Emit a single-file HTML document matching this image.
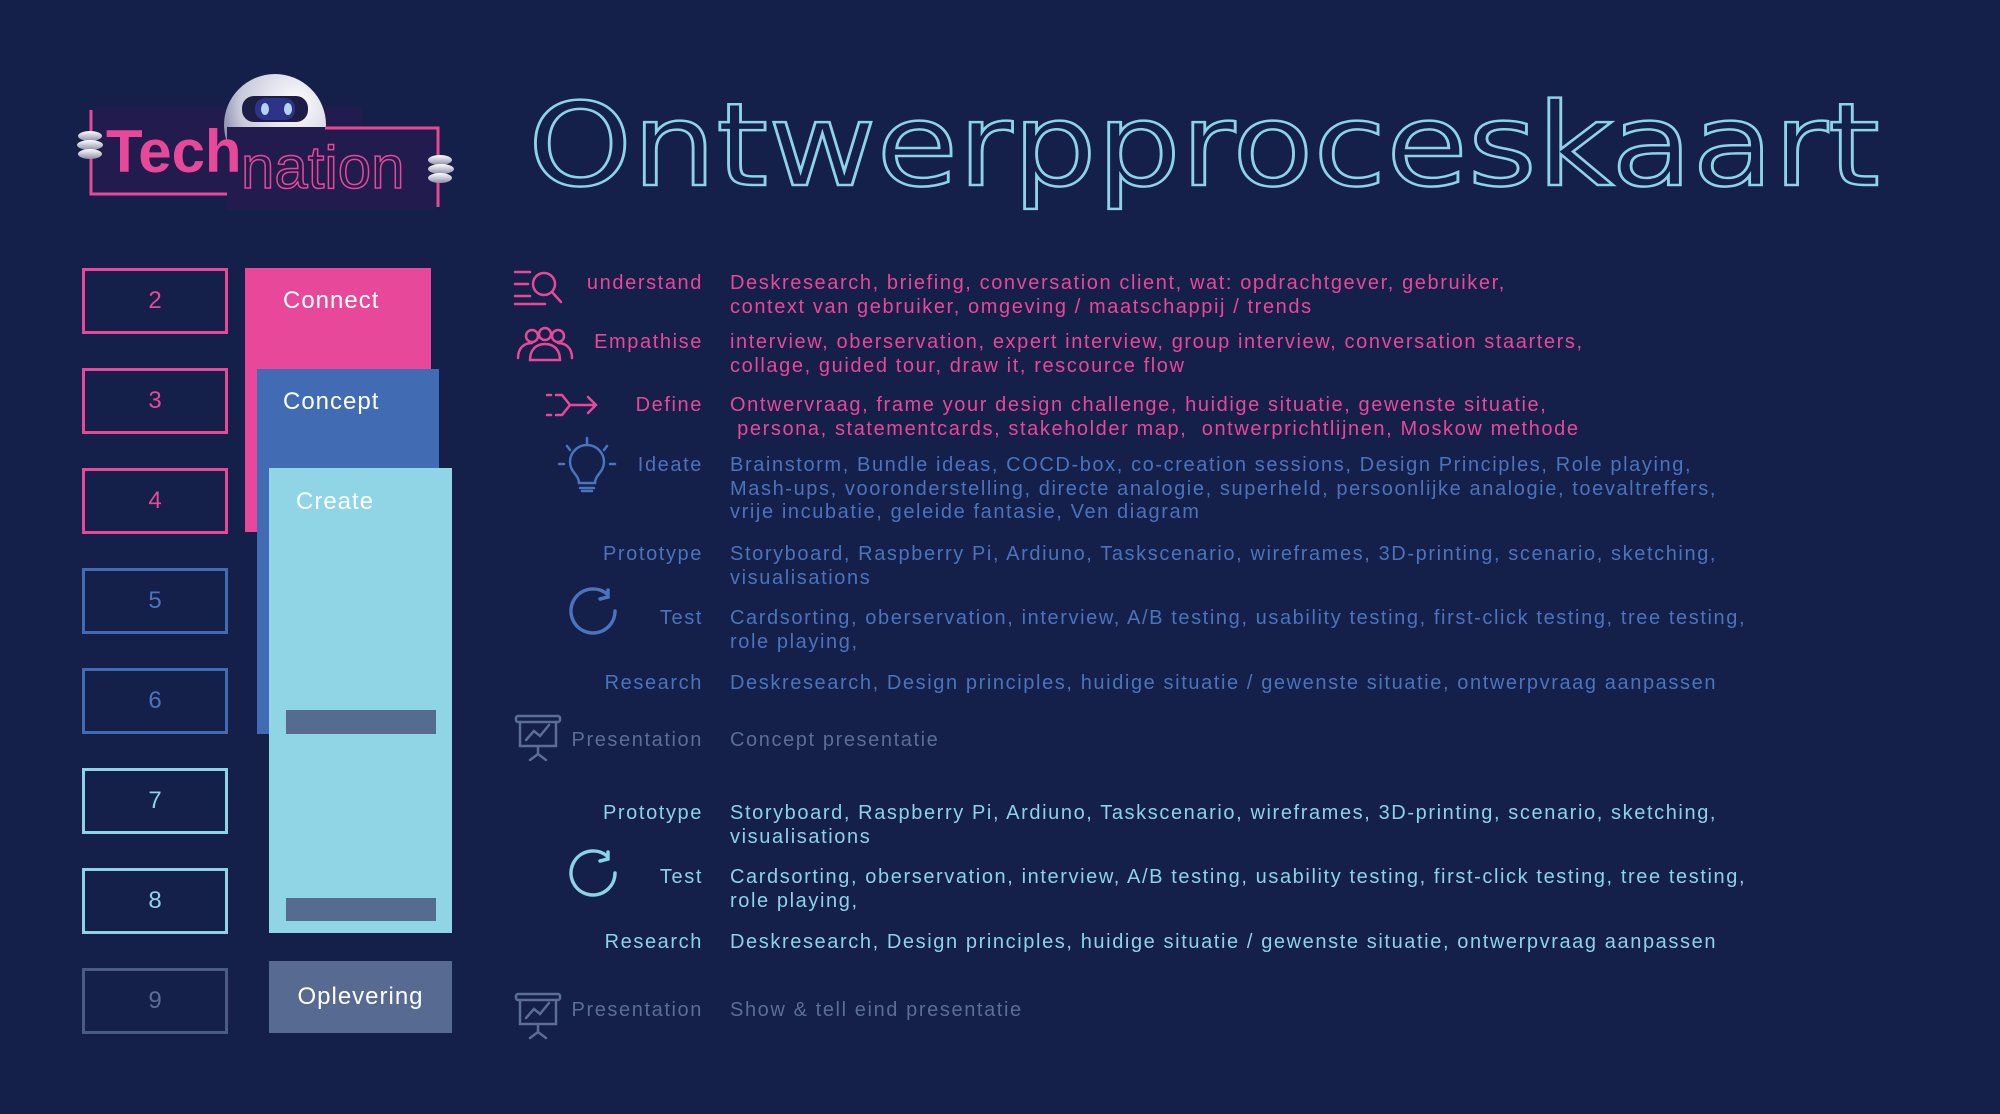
<!DOCTYPE html>
<html><head><meta charset="utf-8"><style>
body{margin:0;width:2000px;height:1114px;background:#141f4a;overflow:hidden;position:relative;font-family:"Liberation Sans",sans-serif}
.a{position:absolute}
.num{position:absolute;left:82px;width:140px;height:60px;border:3px solid;font-size:24px;text-align:center;line-height:60px}
.lab{position:absolute;width:300px;left:403px;text-align:right;font-size:20px;letter-spacing:1.6px;white-space:nowrap}
.txt{position:absolute;left:730px;font-size:20px;letter-spacing:1.6px;white-space:nowrap;line-height:23.6px}
.p{color:#e8489a}.b{color:#4a74bd}.c{color:#8dd3e6}.g{color:#5b6e93}
.blk{position:absolute;color:#fff;font-size:24px;letter-spacing:1px}
</style></head><body>

<svg class="a" style="left:0;top:0" width="480" height="230">
<defs><radialGradient id="hg" cx="0.7" cy="0.3" r="0.9"><stop offset="0" stop-color="#fff"/><stop offset="0.6" stop-color="#c9cbdc"/><stop offset="1" stop-color="#5d6188"/></radialGradient>
<linearGradient id="hand" x1="0" y1="0" x2="0" y2="1"><stop offset="0" stop-color="#fff"/><stop offset="1" stop-color="#8d90a8"/></linearGradient></defs>
<rect x="95" y="107" width="267" height="88" fill="#221b4d"/>
<path d="M91 110 V194 H230" fill="none" stroke="#e8489a" stroke-width="3"/>
<circle cx="275" cy="125" r="51" fill="url(#hg)"/>
<rect x="227" y="127" width="208" height="83" fill="#221b4d"/>
<path d="M325 128 H438 V207" fill="none" stroke="#e8489a" stroke-width="3"/>
<rect x="242" y="96" width="66" height="26" rx="12" fill="#1d1d45"/>
<rect x="255" y="98" width="40" height="22" rx="10" fill="#2b3487"/>
<ellipse cx="265" cy="109" rx="4" ry="6" fill="#b8d2f2"/><ellipse cx="288" cy="109" rx="4" ry="6" fill="#b8d2f2"/>
<text x="106" y="172" font-family="Liberation Sans" font-weight="bold" font-size="60" fill="#e8489a">Tech</text>
<text x="241" y="188" font-family="Liberation Sans" font-size="60" fill="none" stroke="#e8489a" stroke-width="1.5">nation</text>
<g fill="url(#hand)"><ellipse cx="90" cy="136" rx="12" ry="5"/><ellipse cx="90" cy="145" rx="13" ry="5"/><ellipse cx="90" cy="154" rx="12" ry="5"/>
<ellipse cx="440" cy="160" rx="12" ry="5"/><ellipse cx="441" cy="169" rx="13" ry="5"/><ellipse cx="440" cy="178" rx="12" ry="5"/></g>
</svg>

<svg class="a" style="left:0;top:0" width="2000" height="230">
<text x="528" y="185" font-family="DejaVu Sans" font-size="115" textLength="1352" lengthAdjust="spacingAndGlyphs" fill="none" stroke="#8dd3e6" stroke-width="2.5">Ontwerpproceskaart</text>
</svg>

<div class="num p" style="top:268px;border-color:#e8489a">2</div>
<div class="num p" style="top:368px;border-color:#e8489a">3</div>
<div class="num p" style="top:468px;border-color:#e8489a">4</div>
<div class="num b" style="top:568px;border-color:#416cb3">5</div>
<div class="num b" style="top:668px;border-color:#416cb3">6</div>
<div class="num c" style="top:768px;border-color:#8dd3e6">7</div>
<div class="num c" style="top:868px;border-color:#8dd3e6">8</div>
<div class="num g" style="top:968px;border-color:#4a5c85">9</div>

<div class="a" style="left:245px;top:268px;width:186px;height:264px;background:#e8489a"></div>
<div class="blk" style="left:283px;top:287px">Connect</div>
<div class="a" style="left:257px;top:369px;width:182px;height:365px;background:#416cb3"></div>
<div class="blk" style="left:283px;top:388px">Concept</div>
<div class="a" style="left:269px;top:468px;width:183px;height:465px;background:#8fd5e6"></div>
<div class="blk" style="left:296px;top:488px">Create</div>
<div class="a" style="left:286px;top:710px;width:150px;height:24px;background:#566b90"></div>
<div class="a" style="left:286px;top:898px;width:150px;height:23px;background:#566b90"></div>
<div class="a" style="left:269px;top:961px;width:183px;height:72px;background:#576b92"></div>
<div class="blk" style="left:269px;width:183px;text-align:center;top:983px">Oplevering</div>

<svg class="a" style="left:0;top:0" width="700" height="1114" fill="none" stroke-linecap="round">
<g stroke="#e8489a" stroke-width="2.5">
<path d="M515 272H530M515 284H528M515 296H530M515 304H545"/><circle cx="544" cy="284" r="11"/><path d="M552 292L561 302"/>
<circle cx="532" cy="336" r="6"/><circle cx="545" cy="334" r="6"/><circle cx="558" cy="336" r="6"/>
<path d="M518 358c0-10 6-15 14-15M572 358c0-10-6-15-14-15M530 360c0-10 6-16 15-16s15 6 15 16z"/>
<path d="M547 395h4M547 415h4M556 395h6l8 10-8 10h-6M570 405h26M588 397l8 8-8 8"/>
</g>
<g stroke="#4a74bd" stroke-width="2.5">
<path d="M587 438v6M567 446l3 4M607 446l-3 4M559 464h5M610 464h5"/>
<path d="M579 483c0-8-9-11-9-21a17 17 0 0 1 34 0c0 10-9 13-9 21zM580 488h14M582 491h10"/>
<path d="M615 611a22 22 0 1 1 -8-17M608 590l0 7-8 2" stroke-width="3.5"/>
</g>
<g stroke="#5b6e93" stroke-width="2.5">
<rect x="516" y="716" width="44" height="6" rx="2"/><path d="M520 722v24h36v-24M538 746v8M530 760l8-6 8 6M526 740l8-9 6 5 9-11"/>
<rect x="516" y="994" width="44" height="6" rx="2"/><path d="M520 1000v24h36v-24M538 1024v8M530 1038l8-6 8 6M526 1018l8-9 6 5 9-11"/>
</g>
<path d="M615 873a22 22 0 1 1 -8-17M608 852l0 7-8 2" stroke="#8dd3e6" stroke-width="3.5"/>
</svg>

<div class="lab p" style="top:272px">understand</div>
<div class="txt p" style="top:272px">Deskresearch, briefing, conversation client, wat: opdrachtgever, gebruiker,<br>context van gebruiker, omgeving / maatschappij / trends</div>
<div class="lab p" style="top:331px">Empathise</div>
<div class="txt p" style="top:331px">interview, oberservation, expert interview, group interview, conversation staarters,<br>collage, guided tour, draw it, rescource flow</div>
<div class="lab p" style="top:394px">Define</div>
<div class="txt p" style="top:394px">Ontwervraag, frame your design challenge, huidige situatie, gewenste situatie,<br>&nbsp;persona, statementcards, stakeholder map,&nbsp; ontwerprichtlijnen, Moskow methode</div>
<div class="lab b" style="top:454px">Ideate</div>
<div class="txt b" style="top:454px">Brainstorm, Bundle ideas, COCD-box, co-creation sessions, Design Principles, Role playing,<br>Mash-ups, vooronderstelling, directe analogie, superheld, persoonlijke analogie, toevaltreffers,<br>vrije incubatie, geleide fantasie, Ven diagram</div>
<div class="lab b" style="top:543px">Prototype</div>
<div class="txt b" style="top:543px">Storyboard, Raspberry Pi, Ardiuno, Taskscenario, wireframes, 3D-printing, scenario, sketching,<br>visualisations</div>
<div class="lab b" style="top:607px">Test</div>
<div class="txt b" style="top:607px">Cardsorting, oberservation, interview, A/B testing, usability testing, first-click testing, tree testing,<br>role playing,</div>
<div class="lab b" style="top:672px">Research</div>
<div class="txt b" style="top:672px">Deskresearch, Design principles, huidige situatie / gewenste situatie, ontwerpvraag aanpassen</div>
<div class="lab g" style="top:729px">Presentation</div>
<div class="txt g" style="top:729px">Concept presentatie</div>
<div class="lab c" style="top:802px">Prototype</div>
<div class="txt c" style="top:802px">Storyboard, Raspberry Pi, Ardiuno, Taskscenario, wireframes, 3D-printing, scenario, sketching,<br>visualisations</div>
<div class="lab c" style="top:866px">Test</div>
<div class="txt c" style="top:866px">Cardsorting, oberservation, interview, A/B testing, usability testing, first-click testing, tree testing,<br>role playing,</div>
<div class="lab c" style="top:931px">Research</div>
<div class="txt c" style="top:931px">Deskresearch, Design principles, huidige situatie / gewenste situatie, ontwerpvraag aanpassen</div>
<div class="lab g" style="top:999px">Presentation</div>
<div class="txt g" style="top:999px">Show &amp; tell eind presentatie</div>
</body></html>
